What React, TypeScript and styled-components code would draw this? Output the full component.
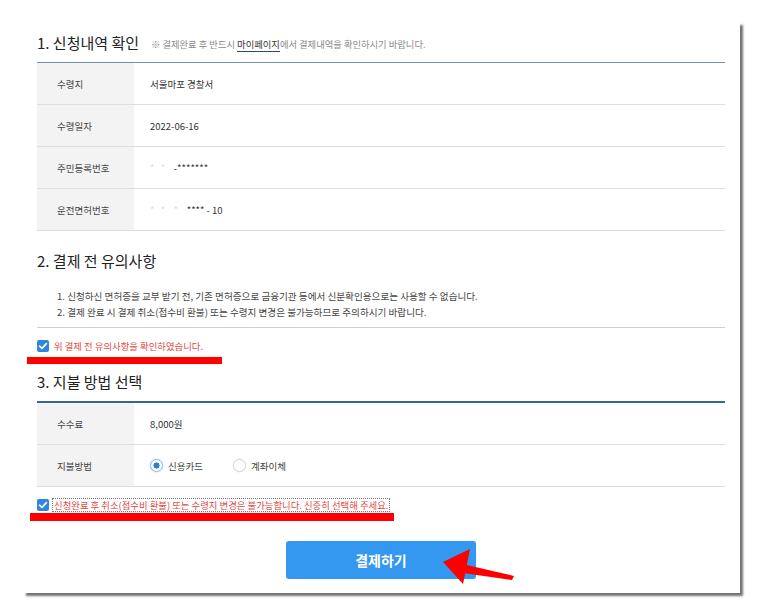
import React from 'react';
import styled, { createGlobalStyle } from 'styled-components';

const GlobalStyle = createGlobalStyle`
  html, body {
    margin: 0;
    padding: 0;
    background: #fff;
  }
  body {
    font-family: "Noto Sans CJK KR", "Noto Sans", sans-serif;
  }
`;

type Row = { label: string; value: React.ReactNode };

const CheckMark = () => (
  <CheckBox>
    <svg width="12" height="12" viewBox="0 0 12 12">
      <path d="M2.6 6.2 L5 8.4 L9.4 3.6" fill="none" stroke="#fff" strokeWidth="1.7" strokeLinecap="round" strokeLinejoin="round" />
    </svg>
  </CheckBox>
);

const App = () => {
  const infoRows: Row[] = [
    { label: '수령지', value: '서울마포 경찰서' },
    { label: '수령일자', value: '2022-06-16' },
    {
      label: '주민등록번호',
      value: (
        <>
          <Blur>*&nbsp;&nbsp;&nbsp;*&nbsp;&nbsp;&nbsp;&nbsp;</Blur>-*******
        </>
      ),
    },
    {
      label: '운전면허번호',
      value: (
        <>
          <Blur>*&nbsp;&nbsp;&nbsp;*&nbsp;&nbsp;&nbsp;&nbsp;*&nbsp;&nbsp;&nbsp;&nbsp;</Blur>**** - 10
        </>
      ),
    },
  ];

  return (
    <>
      <GlobalStyle />
      <Page>
        <Panel>
          <SectionTitle $top={0}>
            1. 신청내역 확인
            <TitleNote>
              ※ 결제완료 후 반드시 <MyPage>마이페이지</MyPage>에서 결제내역을 확인하시기 바랍니다.
            </TitleNote>
          </SectionTitle>
          <InfoTable $line="#7490ab" $width={1}>
            {infoRows.map((row) => (
              <TableRow key={row.label}>
                <Label>{row.label}</Label>
                <Value>{row.value}</Value>
              </TableRow>
            ))}
          </InfoTable>

          <SectionTitle $top={9}>2. 결제 전 유의사항</SectionTitle>
          <Notice>
            <li>1. 신청하신 면허증을 교부 받기 전, 기존 면허증으로 금융기관 등에서 신분확인용으로는 사용할 수 없습니다.</li>
            <li>2. 결제 완료 시 결제 취소(접수비 환불) 또는 수령지 변경은 불가능하므로 주의하시기 바랍니다.</li>
          </Notice>
          <CheckRow $height={33}>
            <CheckMark />
            <WarnText>위 결제 전 유의사항을 확인하였습니다.</WarnText>
          </CheckRow>

          <SectionTitle $top={0}>3. 지불 방법 선택</SectionTitle>
          <InfoTable $line="#3a6591" $width={2}>
            <TableRow>
              <Label>수수료</Label>
              <Value>8,000원</Value>
            </TableRow>
            <TableRow>
              <Label>지불방법</Label>
              <Value>
                <RadioGroup>
                  <RadioOption>
                    <Radio $checked />
                    신용카드
                  </RadioOption>
                  <RadioOption>
                    <Radio />
                    계좌이체
                  </RadioOption>
                </RadioGroup>
              </Value>
            </TableRow>
          </InfoTable>
          <CheckRow $height={30}>
            <CheckMark />
            <WarnText $focused>
              신청완료 후 취소(접수비 환불) 또는 수령지 변경은 불가능합니다. 신중히 선택해 주세요.
            </WarnText>
          </CheckRow>

          <ButtonRow>
            <PayButton type="button">결제하기</PayButton>
          </ButtonRow>
        </Panel>

        <Markup width="760" height="613" viewBox="0 0 760 613">
          <rect x="27" y="357" width="195" height="7" fill="#ff0000" />
          <rect x="30" y="513" width="364" height="8" fill="#ff0000" />
          <polygon points="443,562 470,549 463,584" fill="#ff0000" />
          <polygon points="458,563 514,576 512,580 456,572" fill="#ff0000" />
        </Markup>
      </Page>
    </>
  );
};

export default App;

const Page = styled.div`
  position: relative;
  width: 760px;
  height: 613px;
  padding: 22px 0 0 23px;
  box-sizing: border-box;
  overflow: hidden;
  background: #fff;
`;

const Panel = styled.div`
  width: 717px;
  height: 571px;
  box-sizing: border-box;
  padding: 0 15px 0 14px;
  background: #fff;
  box-shadow: 3px 3px 2px rgba(0, 0, 0, 0.55);
  display: flex;
  flex-direction: column;
`;

const SectionTitle = styled.div<{ $top: number }>`
  height: 40px;
  flex-shrink: 0;
  margin-top: ${({ $top }) => $top}px;
  display: flex;
  align-items: center;
  gap: 12px;
  font-size: 15px;
  color: #222;
  white-space: nowrap;
`;

const TitleNote = styled.span`
  font-size: 9.3px;
  color: #8a8a8a;
  padding-top: 3px;
`;

const MyPage = styled.span`
  color: #333;
  border-bottom: 1px solid #2e4a6b;
`;

const InfoTable = styled.div<{ $line: string; $width: number }>`
  flex-shrink: 0;
  border-top: ${({ $width, $line }) => `${$width}px solid ${$line}`};
`;

const TableRow = styled.div`
  display: grid;
  grid-template-columns: 97px 1fr;
  height: 42px;
  box-sizing: border-box;
  border-bottom: 1px solid #dedede;
`;

const Label = styled.div`
  background: #f3f3f3;
  padding-left: 20px;
  display: flex;
  align-items: center;
  font-size: 9.5px;
  color: #444;
`;

const Value = styled.div`
  padding-left: 16px;
  display: flex;
  align-items: center;
  font-size: 9.5px;
  color: #333;
`;

const Blur = styled.span`
  color: #dcdcdc;
  filter: blur(0.6px);
`;

const Notice = styled.ul`
  flex-shrink: 0;
  list-style: none;
  margin: 0;
  padding: 8px 0 7px 20px;
  border-bottom: 1px solid #cfcfcf;
  font-size: 9.6px;
  line-height: 16px;
  color: #444;
  white-space: nowrap;
`;

const CheckRow = styled.div<{ $height: number }>`
  height: ${({ $height }) => $height}px;
  flex-shrink: 0;
  box-sizing: border-box;
  padding-top: 12px;
  display: flex;
  align-items: flex-start;
  gap: 4px;
`;

const CheckBox = styled.span`
  width: 12px;
  height: 12px;
  border-radius: 2px;
  background: #2f86dd;
  display: inline-flex;
  flex-shrink: 0;
`;

const WarnText = styled.span<{ $focused?: boolean }>`
  font-size: 9.4px;
  line-height: 12px;
  color: #e04a3f;
  white-space: nowrap;
  padding: 0 1px;
  outline: ${({ $focused }) => ($focused ? '1px dotted #777' : 'none')};
`;

const RadioGroup = styled.div`
  display: flex;
  align-items: center;
  gap: 30px;
`;

const RadioOption = styled.label`
  display: flex;
  align-items: center;
  gap: 5px;
  font-size: 9.5px;
  color: #444;
`;

const Radio = styled.span<{ $checked?: boolean }>`
  width: 11px;
  height: 11px;
  border-radius: 50%;
  border: 1px solid ${({ $checked }) => ($checked ? '#8fb8e3' : '#d6d6d6')};
  box-shadow: 0 0 2px ${({ $checked }) => ($checked ? 'rgba(60,140,220,0.45)' : 'rgba(0,0,0,0.12)')};
  background: ${({ $checked }) =>
    $checked ? 'radial-gradient(circle, #2f7fd6 0 2.8px, #fff 3.3px)' : '#fff'};
  display: inline-block;
`;

const ButtonRow = styled.div`
  margin-top: 24px;
  display: flex;
  justify-content: center;
`;

const PayButton = styled.button`
  width: 190px;
  height: 38px;
  border: none;
  border-radius: 3px;
  background: #3497f0;
  color: #fff;
  font-family: inherit;
  font-size: 14px;
  font-weight: 700;
  cursor: pointer;
`;

const Markup = styled.svg`
  position: absolute;
  left: 0;
  top: 0;
  pointer-events: none;
`;
